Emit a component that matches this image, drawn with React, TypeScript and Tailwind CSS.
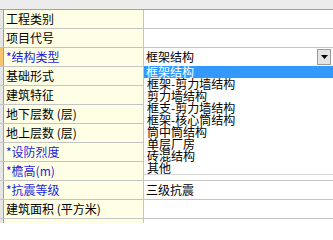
import React from "react";

const rows = [
  { label: "工程类别", value: "" },
  { label: "项目代号", value: "" },
  { label: "*结构类型", value: "框架结构", req: true, select: true },
  { label: "基础形式", value: "" },
  { label: "建筑特征", value: "" },
  { label: "地下层数 (层)", value: "" },
  { label: "地上层数 (层)", value: "" },
  { label: "*设防烈度", value: "", req: true },
  { label: "*檐高(m)", value: "", req: true },
  { label: "*抗震等级", value: "三级抗震", req: true },
  { label: "建筑面积 (平方米)", value: "" },
  { label: "", value: "" },
];

const options = [
  "框架结构",
  "框架-剪力墙结构",
  "剪力墙结构",
  "框支-剪力墙结构",
  "框架-核心筒结构",
  "筒中筒结构",
  "单层厂房",
  "砖混结构",
  "其他",
];

export default function App() {
  return (
    <div
      className="relative h-[223px] w-[333px] overflow-hidden bg-[#f0f0f0] text-[12px] text-black"
      style={{ fontFamily: '"Noto Sans CJK SC", "Noto Sans", sans-serif' }}
    >
      <div className="h-[10px] border-b border-[#a0a0a0] bg-[#ececec]" />

      {rows.map((row, i) => (
        <div key={i} className="flex h-[19px] border-b border-[#c4c4c4]">
          <div
            className={
              row.select
                ? "w-[4px] shrink-0 border-r border-[#a0a0a0] bg-[#f6c46e]"
                : "w-[4px] shrink-0 border-r border-[#a0a0a0] bg-[#e6e6e6]"
            }
          />
          <div
            className={
              row.req
                ? "flex w-[140px] shrink-0 items-center whitespace-pre border-r border-[#c4c4c4] bg-[#ffffe6] pl-[2px] leading-none text-[#1c1ce0]"
                : "flex w-[140px] shrink-0 items-center whitespace-pre border-r border-[#c4c4c4] bg-[#ffffe6] pl-[2px] leading-none"
            }
          >
            {row.label}
          </div>
          <div className="relative flex flex-1 items-center bg-white pl-[2px] leading-none">
            {row.value}
            {row.select && (
              <>
                <div className="absolute right-[2px] top-[1px] flex h-[16px] w-[14px] items-center justify-center border border-[#9a9a9a] bg-[#e4e4e4]">
                  <svg width="7" height="4" viewBox="0 0 7 4">
                    <path d="M0 0h7L3.5 4z" fill="#000" />
                  </svg>
                </div>
                <div className="absolute left-0 right-0 top-[18px] z-10 border-b border-[#d8d8d8] bg-white">
                  {options.map((opt, j) => (
                    <div
                      key={opt}
                      className={
                        j === 0
                          ? "h-[12px] bg-[#3399ff] pl-[2px] leading-[12px] text-white"
                          : "h-[12px] pl-[3px] leading-[12px]"
                      }
                    >
                      {opt}
                    </div>
                  ))}
                </div>
              </>
            )}
          </div>
        </div>
      ))}
    </div>
  );
}
